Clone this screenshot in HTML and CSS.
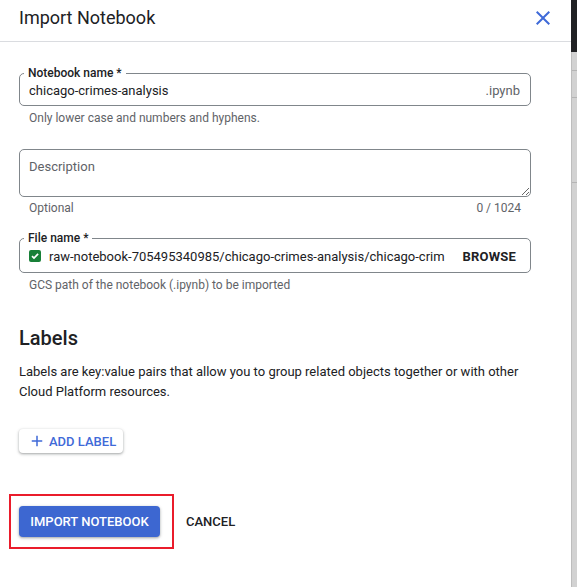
FILE: index.html
```html
<!DOCTYPE html>
<html lang="en">
<head>
<meta charset="utf-8">
<title>Import Notebook</title>
<link rel="stylesheet" href="styles.css">
</head>
<body>
<div class="page">
  <div class="dialog">
    <header class="dialog-header">
      <h1 class="dialog-title">Import Notebook</h1>
      <button class="close-btn" aria-label="Close">
        <svg viewBox="0 0 24 24" width="24" height="24"><path d="M19 6.41 17.59 5 12 10.59 6.41 5 5 6.41 10.59 12 5 17.59 6.41 19 12 13.41 17.59 19 19 17.59 13.41 12z" fill="currentColor"/></svg>
      </button>
    </header>

    <div class="dialog-body">
      <div class="form-group">
        <fieldset class="outlined">
          <legend class="outlined-label">Notebook name *</legend>
          <div class="field-row">
            <span class="field-value">chicago-crimes-analysis</span>
            <span class="field-suffix">.ipynb</span>
          </div>
        </fieldset>
        <div class="hint-row"><span>Only lower case and numbers and hyphens.</span></div>
      </div>

      <div class="form-group desc-group">
        <textarea class="textarea" placeholder="Description"></textarea>
        <div class="hint-row"><span>Optional</span><span>0 / 1024</span></div>
      </div>

      <div class="form-group file-group">
        <fieldset class="outlined">
          <legend class="outlined-label">File name *</legend>
          <div class="field-row file-row">
            <span class="check">
              <svg viewBox="0 0 12 12" width="12" height="12"><rect width="12" height="12" rx="2" fill="#188038"/><path d="M3 6.2 5 8.1 9.1 3.9" fill="none" stroke="#fff" stroke-width="1.7"/></svg>
            </span>
            <span class="field-value file-path">raw-notebook-705495340985/chicago-crimes-analysis/chicago-crim</span>
            <span class="browse">BROWSE</span>
          </div>
        </fieldset>
        <div class="hint-row"><span>GCS path of the notebook (.ipynb) to be imported</span></div>
      </div>

      <section class="labels">
        <h2 class="labels-title">Labels</h2>
        <p class="labels-text">Labels are key:value pairs that allow you to group related objects together or with other Cloud Platform resources.</p>
        <button class="add-label">
          <svg viewBox="0 0 24 24" width="18" height="18"><path d="M19 13h-6v6h-2v-6H5v-2h6V5h2v6h6v2z" fill="currentColor"/></svg>
          <span>ADD LABEL</span>
        </button>
      </section>

      <div class="actions">
        <div class="highlight">
          <button class="primary-btn">IMPORT NOTEBOOK</button>
        </div>
        <button class="text-btn">CANCEL</button>
      </div>
    </div>
  </div>
  <div class="backdrop-strip">
    <div class="strip-top"></div>
    <div class="strip-line l1"></div>
    <div class="strip-line l2"></div>
    <div class="strip-line l3"></div>
  </div>
</div>
</body>
</html>
```

FILE: styles.css
```css
* { box-sizing: border-box; }
html, body {
  margin: 0;
  padding: 0;
  background: #fff;
}
body {
  font-family: Roboto, "Liberation Sans", Arial, sans-serif;
  color: #202124;
  width: 577px;
  height: 587px;
  overflow: hidden;
}
.page {
  display: flex;
  width: 577px;
  height: 587px;
}
.dialog {
  width: 571px;
  height: 587px;
  background: #fff;
  display: flex;
  flex-direction: column;
}
.dialog-header {
  height: 42px;
  border-bottom: 1px solid #dadce0;
  display: flex;
  align-items: center;
  justify-content: space-between;
  padding: 0 16px 6px 19px;
}
.dialog-title {
  margin: 0;
  font-size: 18px;
  font-weight: 400;
  color: #202124;
}
.close-btn {
  border: 0;
  background: none;
  padding: 0;
  color: #3f6ad8;
  width: 24px;
  height: 24px;
  display: flex;
}
.dialog-body {
  padding: 24px 40px 0 19px;
  display: flex;
  flex-direction: column;
}
.form-group {
  display: flex;
  flex-direction: column;
}
.outlined {
  margin: 0;
  padding: 0 9px 0 4px;
  border: 1px solid #80868b;
  border-radius: 5px;
  min-width: 0;
}
.outlined-label {
  font-size: 12px;
  line-height: 14px;
  font-weight: 500;
  color: #202124;
  padding: 0 4px;
}
.field-row {
  display: flex;
  align-items: center;
  height: 25px;
  padding: 0 0 5px 5px;
  font-size: 13px;
}
.file-row {
  height: 27px;
}
.field-value {
  flex: 1;
  white-space: nowrap;
  overflow: hidden;
  color: #202124;
}
.field-suffix {
  color: #5f6368;
  margin-right: 1px;
}
.hint-row {
  display: flex;
  justify-content: space-between;
  padding: 5px 10px 0 10px;
  font-size: 12px;
  line-height: 14px;
  color: #5f6368;
}
.desc-group {
  margin-top: 24px;
}
.textarea {
  display: block;
  width: 512px;
  height: 48px;
  border: 1px solid #80868b;
  border-radius: 5px;
  padding: 9px 9px;
  font-family: inherit;
  font-size: 13px;
  color: #202124;
  resize: vertical;
  outline: none;
}
.textarea::placeholder {
  color: #5f6368;
}
.desc-group .hint-row {
  padding-top: 4px;
}
.file-group {
  margin-top: 16px;
}
.check {
  display: flex;
  width: 12px;
  height: 12px;
  margin-right: 8px;
}
.file-path {
  flex: 0 1 auto;
}
.browse {
  margin-left: auto;
  margin-right: 5px;
  font-weight: 700;
  font-size: 13px;
  letter-spacing: 0.2px;
  color: #202124;
}
.labels {
  margin-top: 34px;
}
.labels-title {
  margin: 0;
  font-size: 20px;
  font-weight: 500;
  line-height: 24px;
  color: #202124;
}
.labels-text {
  margin: 12px 0 0;
  font-size: 13px;
  line-height: 20px;
  color: #202124;
}
.add-label {
  margin-top: 27px;
  display: inline-flex;
  align-items: center;
  gap: 3px;
  height: 24px;
  padding: 0 7px 0 9px;
  border: 0;
  border-radius: 4px;
  background: #fff;
  color: #3f6ad8;
  font-family: inherit;
  font-size: 13px;
  font-weight: 500;
  box-shadow: 0 1px 2px rgba(60,64,67,.3), 0 1px 3px 1px rgba(60,64,67,.15);
}
.actions {
  margin-top: 40px;
  margin-left: -10px;
  display: flex;
  align-items: center;
  gap: 12px;
}
.highlight {
  border: 2px solid #ea1c2b;
  padding: 10px 12px 10px 8px;
  display: flex;
}
.primary-btn {
  width: 141px;
  height: 31px;
  border: 0;
  border-radius: 4px;
  background: #3d67d1;
  color: #fff;
  font-family: inherit;
  font-size: 13px;
  font-weight: 500;
  letter-spacing: 0;
  box-shadow: 0 1px 2px rgba(60,64,67,.3), 0 1px 3px 1px rgba(60,64,67,.15);
}
.text-btn {
  border: 0;
  background: none;
  padding: 0;
  font-family: inherit;
  font-size: 13px;
  font-weight: 500;
  color: #202124;
}
.backdrop-strip {
  width: 6px;
  height: 587px;
  background: #d2d2d2;
  border-left: 1px solid #bdbdbd;
  display: flex;
  flex-direction: column;
}
.strip-top {
  height: 52px;
  background: #202124;
  margin-left: -1px;
}
.strip-line {
  height: 1px;
  background: #b5b5b5;
}
.l1 { margin-top: 18px; }
.l2 { margin-top: 26px; }
.l3 { margin-top: 84px; }
```
